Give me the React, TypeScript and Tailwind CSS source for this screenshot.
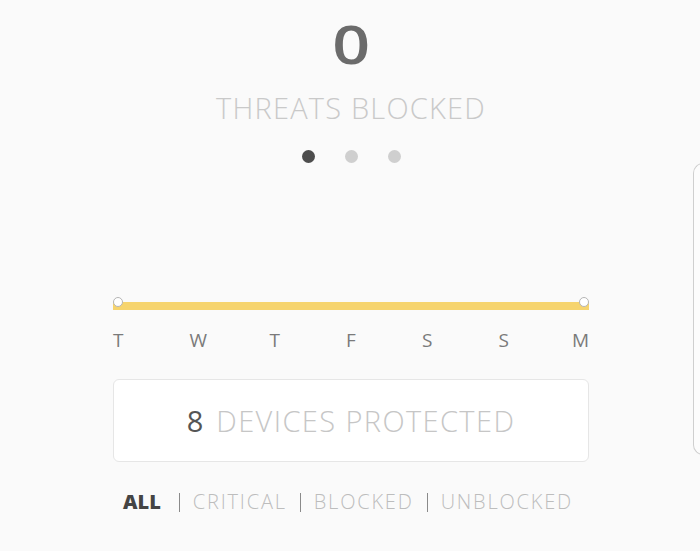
const DAYS = ["T", "W", "T", "F", "S", "S", "M"];
const FILTERS = ["CRITICAL", "BLOCKED", "UNBLOCKED"];

function Dots() {
  return (
    <div className="flex items-center gap-[30px]">
      <span className="h-[13px] w-[13px] rounded-full bg-[#4d4d4d]" />
      <span className="h-[13px] w-[13px] rounded-full bg-[#cfcfcf]" />
      <span className="h-[13px] w-[13px] rounded-full bg-[#cfcfcf]" />
    </div>
  );
}

function WeekBar() {
  return (
    <div className="w-full">
      <div className="relative h-[8px] w-full bg-[#f6d46e]">
        <span className="absolute left-[0px] top-[-5px] h-[10px] w-[10px] rounded-full border border-[#b5b5b5] bg-white" />
        <span className="absolute right-[0px] top-[-5px] h-[10px] w-[10px] rounded-full border border-[#b5b5b5] bg-white" />
      </div>
      <div className="mt-[21px] flex justify-between text-[19px] leading-none text-[#7a7a7a]">
        {DAYS.map((d, i) => (
          <span key={i} className="w-[18px] text-center first:text-left last:text-right">
            {d}
          </span>
        ))}
      </div>
    </div>
  );
}

export default function App() {
  return (
    <div className="flex h-[551px] w-full overflow-hidden bg-[#fafafa] font-['Open_Sans','Liberation_Sans',sans-serif]">
      <div className="ml-[113px] flex w-[476px] shrink-0 flex-col items-center">
        <div className="mt-[17px] scale-x-125 text-[53px] font-semibold leading-none text-[#6b6b6b]">0</div>
        <div className="mt-[23px] text-[29px] font-light leading-none tracking-[1.2px] text-[#c9c9c9]">
          THREATS BLOCKED
        </div>
        <div className="mt-[28px]">
          <Dots />
        </div>
        <div className="mt-[139px] w-full">
          <WeekBar />
        </div>
        <div className="mt-[29px] flex h-[83px] w-full items-center justify-center gap-[13px] rounded-[6px] border border-[#e6e6e6] bg-white">
          <span className="text-[29px] leading-none text-[#555555]">8</span>
          <span className="text-[29px] font-light leading-none tracking-[1.4px] text-[#c6c6c6]">DEVICES PROTECTED</span>
        </div>
        <div className="mt-[30px] flex items-center self-start pl-[10px] text-[20px] leading-none text-[#bdbdbd]">
          <span className="mr-[5px] font-extrabold text-[#444444]">ALL</span>
          {FILTERS.map((f) => (
            <span key={f} className="flex items-center">
              <span className="mx-[13px] h-[19px] w-px bg-[#8a8a8a]" />
              <span className="font-light tracking-[1.8px]">{f}</span>
            </span>
          ))}
        </div>
      </div>
      <div className="ml-[104px] mt-[163px] h-[292px] w-[40px] shrink-0 rounded-l-[10px] border border-r-0 border-[#cfcfcf] bg-[#fcfcfc]" />
    </div>
  );
}
